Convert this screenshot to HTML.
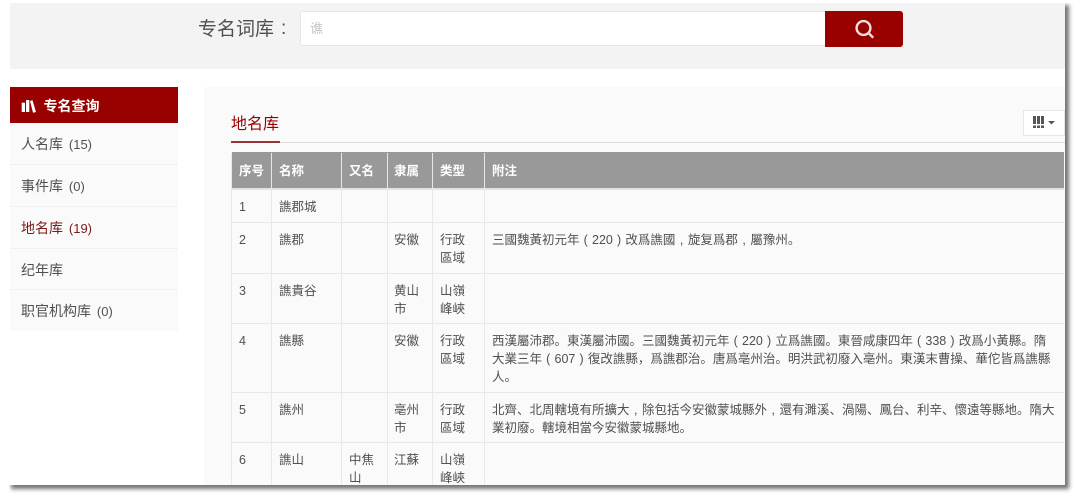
<!DOCTYPE html>
<html lang="zh">
<head>
<meta charset="utf-8">
<style>
html,body{margin:0;padding:0;background:#fff}
body{width:1080px;height:499px;position:relative;overflow:hidden;font-family:"Liberation Sans","Noto Sans CJK TC",sans-serif;color:#555}
.a{position:absolute}
.t{position:absolute;white-space:nowrap;font-size:12.5px;line-height:18px;color:#505050}
.p{display:inline-block;width:12.5px;text-align:center}
.item{position:absolute;left:10px;width:168px;background:#fafafa;border-bottom:1px solid #f0f0f0;box-sizing:border-box;font-size:14px;color:#505050;padding-left:11px;white-space:nowrap}
.item span{font-size:13px;margin-left:2px}
.v{position:absolute;top:153px;width:1px;height:332px;background:#e8e8e8}
.h{position:absolute;left:231px;width:833px;height:1px;background:#e8e8e8}
.th{position:absolute;top:162px;color:#fff;font-weight:bold;font-size:12.5px;line-height:18px;white-space:nowrap}
</style>
</head>
<body>
<div class="a" style="left:9px;top:3px;width:1056px;height:482px;background:#fff;box-shadow:3px 3px 4px 1px rgba(70,70,70,.75)"></div>
<div class="a" style="left:0;top:0;width:9px;height:499px;background:#fff"></div>
<div class="a" style="left:0;top:0;width:1080px;height:3px;background:#fff"></div>

<div class="a" style="left:10px;top:3px;width:1055px;height:66px;background:#f3f3f3"></div>
<div class="a" style="left:198px;top:17px;font-size:19px;line-height:26px;color:#505050;white-space:nowrap">专名词库</div>
<div class="a" style="left:281px;top:16px;font-size:19px;line-height:26px;color:#505050">:</div>
<div class="a" style="left:300px;top:11px;width:526px;height:35px;box-sizing:border-box;background:#fff;border:1px solid #e6e6e6;border-radius:3px 0 0 3px"></div>
<div class="a" style="left:310px;top:20px;font-size:13px;line-height:18px;color:#c4c4c4;font-family:'Liberation Sans','Noto Sans CJK SC',sans-serif">谯</div>
<div class="a" style="left:825px;top:11px;width:78px;height:36px;background:#990000;border-radius:0 3px 3px 0"></div>
<svg class="a" style="left:852px;top:17px" width="24" height="24" viewBox="0 0 24 24" fill="none" stroke="#f3dede" stroke-width="2.4"><circle cx="11.5" cy="11" r="6.9"/><path d="M16.5 16l4 4" stroke-linecap="round"/></svg>

<div class="a" style="left:10px;top:87px;width:168px;height:36px;background:#990000"></div>
<svg class="a" style="left:21px;top:98px" width="15" height="15" viewBox="0 0 15 15" fill="#fff"><rect x="0.7" y="4.700" width="3.300" height="9.300"/><rect x="5" y="2" width="3.300" height="12"/><path d="M9 3l2.500-.7 3.500 11.700-3 .8z"/></svg>
<div class="a" style="left:43.500px;top:96px;font-size:14px;line-height:20px;font-weight:bold;color:#fff;white-space:nowrap">专名查询</div>
<div class="item" style="top:123px;height:42px;line-height:43px">人名库 <span>(15)</span></div>
<div class="item" style="top:165px;height:42px;line-height:43px">事件库 <span>(0)</span></div>
<div class="item" style="top:207px;height:42px;line-height:43px;color:#7a1a1a">地名库 <span>(19)</span></div>
<div class="item" style="top:249px;height:41px;line-height:42px">纪年库</div>
<div class="item" style="top:290px;height:41px;line-height:43px;border-bottom:0">职官机构库 <span>(0)</span></div>

<div class="a" style="left:204px;top:87px;width:861px;height:398px;background:#fafafa"></div>
<div class="a" style="left:231px;top:113px;font-size:16px;line-height:24px;color:#990000;white-space:nowrap">地名库</div>
<div class="a" style="left:231px;top:142px;width:834px;height:1px;background:#dcdcdc"></div>
<div class="a" style="left:231px;top:141px;width:49px;height:2px;background:#993333"></div>
<div class="a" style="left:1023px;top:110px;width:42px;height:26px;box-sizing:border-box;background:#fff;border:1px solid #e6e6e6"></div>
<svg class="a" style="left:1033px;top:116px" width="24" height="13" viewBox="0 0 24 13" fill="#555"><rect x="0" y="0" width="3" height="8"/><rect x="4" y="0" width="3" height="8"/><rect x="8" y="0" width="3" height="8"/><rect x="0" y="9.500" width="3" height="2.500"/><rect x="4" y="9.500" width="3" height="2.500"/><rect x="8" y="9.500" width="3" height="2.500"/><path d="M15 5h7l-3.500 3.500z"/></svg>

<div class="a" style="left:232px;top:152px;width:832px;height:36px;background:#999"></div>
<div class="a" style="left:232px;top:188px;width:832px;height:2px;background:#e4e4e4"></div>
<div class="v" style="left:231px"></div>
<div class="v" style="left:271px"></div>
<div class="v" style="left:341px"></div>
<div class="v" style="left:387px"></div>
<div class="v" style="left:432px"></div>
<div class="v" style="left:484px"></div>
<div class="h" style="top:222px"></div>
<div class="h" style="top:273px"></div>
<div class="h" style="top:323px"></div>
<div class="h" style="top:392px"></div>
<div class="h" style="top:442px"></div>

<div class="th" style="left:239px">序号</div>
<div class="th" style="left:279px">名称</div>
<div class="th" style="left:349px">又名</div>
<div class="th" style="left:394px">隶属</div>
<div class="th" style="left:440px">类型</div>
<div class="th" style="left:492px">附注</div>

<div class="t" style="left:239px;top:198px">1</div>
<div class="t" style="left:279px;top:198px">譙郡城</div>

<div class="t" style="left:239px;top:231px">2</div>
<div class="t" style="left:279px;top:231px">譙郡</div>
<div class="t" style="left:394px;top:231px">安徽</div>
<div class="t" style="left:440px;top:231px">行政<br>區域</div>
<div class="t" style="left:492px;top:231px">三國魏黃初元年<span class="p">(</span>220<span class="p">)</span>改爲譙國<span class="p">,</span>旋复爲郡<span class="p">,</span>屬豫州。</div>

<div class="t" style="left:239px;top:282px">3</div>
<div class="t" style="left:279px;top:282px">譙貴谷</div>
<div class="t" style="left:394px;top:282px">黄山<br>市</div>
<div class="t" style="left:440px;top:282px">山嶺<br>峰峽</div>

<div class="t" style="left:239px;top:332px">4</div>
<div class="t" style="left:279px;top:332px">譙縣</div>
<div class="t" style="left:394px;top:332px">安徽</div>
<div class="t" style="left:440px;top:332px">行政<br>區域</div>
<div class="t" style="left:492px;top:332px">西漢屬沛郡。東漢屬沛國。三國魏黃初元年<span class="p">(</span>220<span class="p">)</span>立爲譙國。東晉咸康四年<span class="p">(</span>338<span class="p">)</span>改爲小黃縣。隋<br>大業三年<span class="p">(</span>607<span class="p">)</span>復改譙縣，爲譙郡治。唐爲亳州治。明洪武初廢入亳州。東漢末曹操、華佗皆爲譙縣<br>人。</div>

<div class="t" style="left:239px;top:401px">5</div>
<div class="t" style="left:279px;top:401px">譙州</div>
<div class="t" style="left:394px;top:401px">亳州<br>市</div>
<div class="t" style="left:440px;top:401px">行政<br>區域</div>
<div class="t" style="left:492px;top:401px">北齊、北周轄境有所擴大<span class="p">,</span>除包括今安徽蒙城縣外<span class="p">,</span>還有濉溪、渦陽、鳳台、利辛、懷遠等縣地。隋大<br>業初廢。轄境相當今安徽蒙城縣地。</div>

<div class="a" style="left:231px;top:443px;width:833px;height:42px;overflow:hidden">
<div class="t" style="left:8px;top:8px">6</div>
<div class="t" style="left:48px;top:8px">譙山</div>
<div class="t" style="left:118px;top:8px">中焦<br>山</div>
<div class="t" style="left:163px;top:8px">江蘇</div>
<div class="t" style="left:209px;top:8px">山嶺<br>峰峽</div>
</div>
</body>
</html>
